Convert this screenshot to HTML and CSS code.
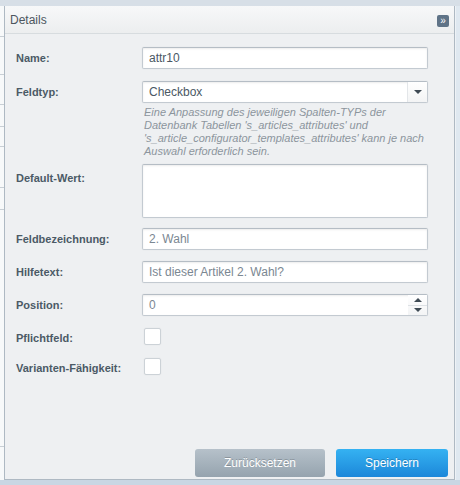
FILE: index.html
```html
<!DOCTYPE html>
<html>
<head>
    <title>Details</title>
    <link rel="stylesheet" href="styles.css">
</head>
<body>
    <div class="screen">
        <!-- Grid behind the panel -->
        <div class="grid-edge">
            <div class="grid-row" style="height: 31px"></div>
            <div class="grid-row" style="height: 38px"></div>
            <div class="grid-row" style="height: 30px"></div>
            <div class="grid-row" style="height: 22px"></div>
            <div class="grid-row" style="height: 20px"></div>
            <div class="grid-row" style="height: 41px"></div>
            <div class="grid-row" style="height: 22px"></div>
            <div class="grid-row" style="height: 237px"></div>
        </div>

        <!-- Details panel -->
        <div class="panel">
            <div class="panel-header">
                <span class="panel-title">Details</span>
                <span class="collapse-btn">&raquo;</span>
            </div>

            <div class="panel-body">
                <form class="form">
                    <div class="row row-name">
                        <label class="field-label">Name:</label>
                        <div class="field"><input class="text-input" type="text" value="attr10"></div>
                    </div>

                    <div class="row row-type">
                        <label class="field-label">Feldtyp:</label>
                        <div class="field combo">
                            <span class="combo-value">Checkbox</span>
                            <span class="combo-trigger"><span class="arrow-down"></span></span>
                        </div>
                    </div>

                    <p class="help-text">Eine Anpassung des jeweiligen Spalten-TYPs der Datenbank Tabellen 's_articles_attributes' und 's_article_configurator_templates_attributes' kann je nach Auswahl erforderlich sein.</p>

                    <div class="row row-default">
                        <label class="field-label label-top">Default-Wert:</label>
                        <div class="field"><textarea class="text-area"></textarea></div>
                    </div>

                    <div class="row row-label">
                        <label class="field-label">Feldbezeichnung:</label>
                        <div class="field"><input class="text-input muted" type="text" value="2. Wahl"></div>
                    </div>

                    <div class="row row-help">
                        <label class="field-label">Hilfetext:</label>
                        <div class="field"><input class="text-input muted" type="text" value="Ist dieser Artikel 2. Wahl?"></div>
                    </div>

                    <div class="row row-position">
                        <label class="field-label">Position:</label>
                        <div class="field combo">
                            <span class="combo-value muted">0</span>
                            <span class="spinner">
                                <span class="spin-half"><span class="arrow-up"></span></span>
                                <span class="spin-half"><span class="arrow-down"></span></span>
                            </span>
                        </div>
                    </div>

                    <div class="row row-check">
                        <label class="field-label label-low">Pflichtfeld:</label>
                        <span class="checkbox"></span>
                    </div>

                    <div class="row row-check2">
                        <label class="field-label label-low">Varianten-Fähigkeit:</label>
                        <span class="checkbox"></span>
                    </div>
                </form>

                <div class="toolbar">
                    <button class="btn btn-secondary" type="button">Zurücksetzen</button>
                    <button class="btn btn-primary" type="button">Speichern</button>
                </div>
            </div>
        </div>

        <div class="side-edge"></div>
    </div>
</body>
</html>
```

FILE: styles.css
```css
/* General Styles */
body {
    margin: 0;
    padding: 0;
    font-family: "Liberation Sans", Arial, sans-serif;
    background-color: #c9d6e3;
    color: #4a5864;
}

.screen {
    display: flex;
    height: 480px;
    padding-top: 6px;
    box-sizing: border-box;
    background: linear-gradient(#d7dfe7, #d7dfe7 6px, transparent 6px);
}

/* Grid peeking out on the left */
.grid-edge {
    width: 4px;
    background-color: #f7f9fa;
}

.grid-row {
    border-bottom: 1px solid #c8cfd5;
    box-sizing: border-box;
}

.side-edge {
    flex: 1;
    background-color: #dfe8f0;
    border-left: 1px solid #eef2f6;
}

/* Panel */
.panel {
    width: 451px;
    display: flex;
    flex-direction: column;
    border: 1px solid #aeb9c3;
    border-top: none;
    box-sizing: border-box;
    background-color: #eef0f2;
}

.panel-header {
    height: 28px;
    display: flex;
    align-items: center;
    justify-content: space-between;
    padding: 0 5px 0 5px;
    background: linear-gradient(#f7f8f9, #eceeef);
    border-bottom: 1px solid #d7dcdf;
    box-sizing: border-box;
}

.panel-title {
    font-size: 12px;
    color: #4c565e;
}

.collapse-btn {
    width: 12px;
    height: 12px;
    margin-top: 2px;
    border-radius: 2px;
    background-color: #5f7387;
    color: #ffffff;
    font-size: 10px;
    line-height: 11px;
    text-align: center;
}

.panel-body {
    flex: 1;
    display: flex;
    flex-direction: column;
    justify-content: space-between;
}

/* Form */
.form {
    padding: 12px 0 0 11px;
}

.row {
    display: flex;
    align-items: center;
    height: 22px;
}

.row-name { margin-top: 1px; }
.row-type { margin-top: 12px; }
.row-default { margin-top: 6px; height: 54px; align-items: flex-start; }
.row-label { margin-top: 10px; }
.row-help { margin-top: 11px; }
.row-position { margin-top: 11px; }
.row-check { margin-top: 11px; height: 18px; }
.row-check2 { margin-top: 12px; height: 18px; }

.field-label {
    width: 126px;
    flex-shrink: 0;
    font-size: 11px;
    font-weight: bold;
    color: #4b5a66;
}

.label-top {
    padding-top: 8px;
}

.label-low {
    padding-top: 3px;
}

.field {
    width: 286px;
    height: 100%;
    box-sizing: border-box;
    border: 1px solid #c3cad1;
    border-top-color: #b5bdc5;
    border-radius: 2px;
    background-color: #ffffff;
    box-shadow: inset 0 1px 2px rgba(0, 0, 0, 0.08), 0 0 2px rgba(0, 0, 0, 0.06);
}

.text-input,
.text-area {
    width: 100%;
    height: 100%;
    box-sizing: border-box;
    border: none;
    outline: none;
    background: transparent;
    padding: 0 6px;
    font-family: inherit;
    font-size: 12px;
    color: #4b5864;
    resize: none;
}

.muted {
    color: #7b8792;
}

.combo {
    display: flex;
    align-items: center;
}

.combo-value {
    flex: 1;
    padding-left: 6px;
    font-size: 12px;
}

.combo-trigger {
    width: 19px;
    height: 100%;
    display: flex;
    align-items: center;
    justify-content: center;
    border-left: 1px solid #e3e6e9;
    background: linear-gradient(#ffffff, #f3f4f5);
}

.spinner {
    width: 19px;
    height: 100%;
    display: flex;
    flex-direction: column;
    background: linear-gradient(#ffffff, #f3f4f5);
}

.spin-half {
    flex: 1;
    display: flex;
    align-items: center;
    justify-content: center;
}

.spin-half + .spin-half {
    border-top: 1px solid #dde1e5;
}

.arrow-down,
.arrow-up {
    width: 0;
    height: 0;
    border-left: 4px solid transparent;
    border-right: 4px solid transparent;
}

.arrow-down { border-top: 4px solid #3f4a54; }
.arrow-up { border-bottom: 4px solid #3f4a54; }

.help-text {
    margin: 3px 0 0 128px;
    width: 290px;
    font-size: 11px;
    line-height: 13px;
    font-style: italic;
    color: #8c959d;
}

.checkbox {
    width: 15px;
    height: 15px;
    margin-left: 2px;
    border: 1px solid #ccd2d7;
    border-radius: 2px;
    background-color: #ffffff;
    box-shadow: 0 0 2px rgba(0, 0, 0, 0.06);
}

/* Buttons */
.toolbar {
    display: flex;
    justify-content: flex-end;
    gap: 11px;
    padding: 0 6px 2px 0;
}

.btn {
    height: 28px;
    border: none;
    border-radius: 3px;
    font-family: inherit;
    font-size: 12px;
    color: #ffffff;
    text-shadow: 0 -1px 0 rgba(0, 0, 0, 0.2);
    cursor: pointer;
}

.btn-secondary {
    width: 130px;
    background: linear-gradient(#b6c1ca, #95a3ae);
}

.btn-primary {
    width: 112px;
    background: linear-gradient(#35b2f2, #1c87d9);
}
```
